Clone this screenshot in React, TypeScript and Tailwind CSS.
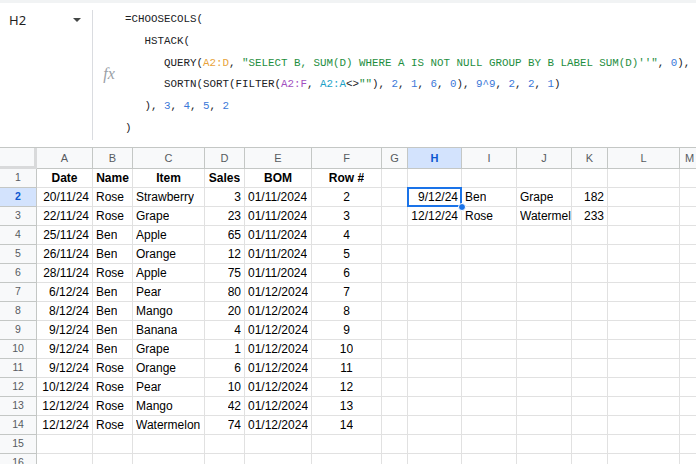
const COLS = [
  { key: 'A', w: 56 },
  { key: 'B', w: 40 },
  { key: 'C', w: 72 },
  { key: 'D', w: 40 },
  { key: 'E', w: 67 },
  { key: 'F', w: 70 },
  { key: 'G', w: 26 },
  { key: 'H', w: 54 },
  { key: 'I', w: 55 },
  { key: 'J', w: 55 },
  { key: 'K', w: 36 },
  { key: 'L', w: 72 },
  { key: 'M', w: 20 },
]

type Align = 'l' | 'r' | 'c'
type Cell = { v: string; a: Align; b?: boolean }

const sales: [string, string, string, string, string, string][] = [
  ['20/11/24', 'Rose', 'Strawberry', '3', '01/11/2024', '2'],
  ['22/11/24', 'Rose', 'Grape', '23', '01/11/2024', '3'],
  ['25/11/24', 'Ben', 'Apple', '65', '01/11/2024', '4'],
  ['26/11/24', 'Ben', 'Orange', '12', '01/11/2024', '5'],
  ['28/11/24', 'Rose', 'Apple', '75', '01/11/2024', '6'],
  ['6/12/24', 'Ben', 'Pear', '80', '01/12/2024', '7'],
  ['8/12/24', 'Ben', 'Mango', '20', '01/12/2024', '8'],
  ['9/12/24', 'Ben', 'Banana', '4', '01/12/2024', '9'],
  ['9/12/24', 'Ben', 'Grape', '1', '01/12/2024', '10'],
  ['9/12/24', 'Rose', 'Orange', '6', '01/12/2024', '11'],
  ['10/12/24', 'Rose', 'Pear', '10', '01/12/2024', '12'],
  ['12/12/24', 'Rose', 'Mango', '42', '01/12/2024', '13'],
  ['12/12/24', 'Rose', 'Watermelon', '74', '01/12/2024', '14'],
]

const result: Record<number, [string, string, string, string]> = {
  2: ['9/12/24', 'Ben', 'Grape', '182'],
  3: ['12/12/24', 'Rose', 'Watermelon', '233'],
}

function rowCells(row: number): Cell[] {
  const empty: Cell = { v: '', a: 'l' }
  const cells: Cell[] = Array.from({ length: COLS.length }, () => empty)
  if (row === 1) {
    ;['Date', 'Name', 'Item', 'Sales', 'BOM', 'Row #'].forEach((v, i) => {
      cells[i] = { v, a: 'c', b: true }
    })
  }
  const s = sales[row - 2]
  if (s) {
    cells[0] = { v: s[0], a: 'r' }
    cells[1] = { v: s[1], a: 'l' }
    cells[2] = { v: s[2], a: 'l' }
    cells[3] = { v: s[3], a: 'r' }
    cells[4] = { v: s[4], a: 'l' }
    cells[5] = { v: s[5], a: 'c' }
  }
  const r = result[row]
  if (r) {
    cells[7] = { v: r[0], a: 'r' }
    cells[8] = { v: r[1], a: 'l' }
    cells[9] = { v: r[2], a: 'l' }
    cells[10] = { v: r[3], a: 'r' }
  }
  return cells
}

const alignClass: Record<Align, string> = {
  l: 'justify-start pl-[3px]',
  r: 'justify-end pr-[3px]',
  c: 'justify-center',
}

const O = ({ children }: { children: React.ReactNode }) => <span className="text-[#e8a33a]">{children}</span>
const G = ({ children }: { children: React.ReactNode }) => <span className="text-[#1e8e3e]">{children}</span>
const N = ({ children }: { children: React.ReactNode }) => <span className="text-[#3b78d8]">{children}</span>
const P = ({ children }: { children: React.ReactNode }) => <span className="text-[#a24fc0]">{children}</span>
const T = ({ children }: { children: React.ReactNode }) => <span className="text-[#1ba1c7]">{children}</span>

function FormulaBar() {
  return (
    <div className="flex h-[145px] border-b border-[#c4c7c5] bg-white">
      <div className="flex w-[92px] shrink-0 items-start justify-between pl-[9px] pr-[11px] pt-[8px]">
        <span className="text-[13px] leading-[18px] text-[#1f1f1f]">H2</span>
        <span className="mt-[7px] h-0 w-0 border-x-[4px] border-t-[4px] border-x-transparent border-t-[#444746]" />
      </div>
      <div className="my-[7px] w-px bg-[#dadce0]" />
      <div className="flex w-[32px] shrink-0 items-center justify-center pb-[2px]">
        <span className="font-['Liberation_Serif',serif] text-[16px] italic text-[#9aa0a6]">fx</span>
      </div>
      <pre className="overflow-hidden whitespace-pre pt-[6px] font-['Liberation_Mono',monospace] text-[10.83px] leading-[21.8px] text-[#202124]">
        {'=CHOOSECOLS(\n'}
        {'   HSTACK(\n'}
        {'      QUERY('}<O>A2:D</O>{', '}
        <G>"SELECT B, SUM(D) WHERE A IS NOT NULL GROUP BY B LABEL SUM(D)''"</G>
        {', '}<N>0</N>{'),\n'}
        {'      SORTN(SORT(FILTER('}<P>A2:F</P>{', '}<T>A2:A</T>{'<>'}<G>""</G>{'), '}
        <N>2</N>{', '}<N>1</N>{', '}<N>6</N>{', '}<N>0</N>{'), '}<N>9^9</N>{', '}<N>2</N>{', '}<N>2</N>{', '}<N>1</N>{')\n'}
        {'   ), '}<N>3</N>{', '}<N>4</N>{', '}<N>5</N>{', '}<N>2</N>{'\n'}
        {')'}
      </pre>
    </div>
  )
}

function Grid() {
  const rows = Array.from({ length: 16 }, (_, i) => i + 1)
  return (
    <div className="font-['Liberation_Sans',Arial,sans-serif]">
      <div className="flex h-[21px]">
        <div className="w-[37px] shrink-0 border-b-[3px] border-r-[3px] border-[#d9dadb] bg-[#f8f9fa]" />
        {COLS.map((c) => (
          <div
            key={c.key}
            style={{ width: c.w }}
            className={`flex shrink-0 items-center justify-center border-b border-r border-[#c4c7c5] text-[11px] ${
              c.key === 'H' ? 'bg-[#d3e3fd] font-semibold text-[#0b57d0]' : 'bg-[#f8f9fa] text-[#575b5f]'
            }`}
          >
            {c.key}
          </div>
        ))}
      </div>
      {rows.map((r) => {
        const cells = rowCells(r)
        return (
          <div key={r} className="relative flex h-[19px]" style={r === 2 ? { zIndex: 10 } : undefined}>
            <div
              className={`flex w-[37px] shrink-0 items-center justify-center border-b border-r border-[#c4c7c5] text-[10.5px] ${
                r === 2 ? 'bg-[#d3e3fd] font-bold text-[#0b57d0]' : 'bg-[#f8f9fa] text-[#575b5f]'
              }`}
            >
              {r}
            </div>
            {COLS.map((c, i) => {
              const cell = cells[i]
              const selected = r === 2 && c.key === 'H'
              return (
                <div
                  key={c.key}
                  style={{ width: c.w }}
                  className={`relative flex shrink-0 items-center whitespace-nowrap border-b border-r border-[#e1e1e1] text-[12px] text-black ${
                    alignClass[cell.a]
                  } ${cell.b ? 'font-bold' : ''} ${selected ? 'z-10' : ''}`}
                >
                  <span className="overflow-hidden">{cell.v}</span>
                  {selected && (
                    <>
                      <span className="pointer-events-none absolute inset-[-1px] z-10 border-2 border-[#1a73e8]" />
                      <span className="absolute bottom-[-5px] right-[-5px] z-20 h-[8px] w-[8px] rounded-full border border-white bg-[#1a73e8]" />
                    </>
                  )}
                </div>
              )
            })}
          </div>
        )
      })}
    </div>
  )
}

export default function App() {
  return (
    <div className="h-[464px] w-[696px] overflow-hidden bg-white">
      <div className="h-[3px] bg-[#f1f3f4]" />
      <FormulaBar />
      <Grid />
    </div>
  )
}
